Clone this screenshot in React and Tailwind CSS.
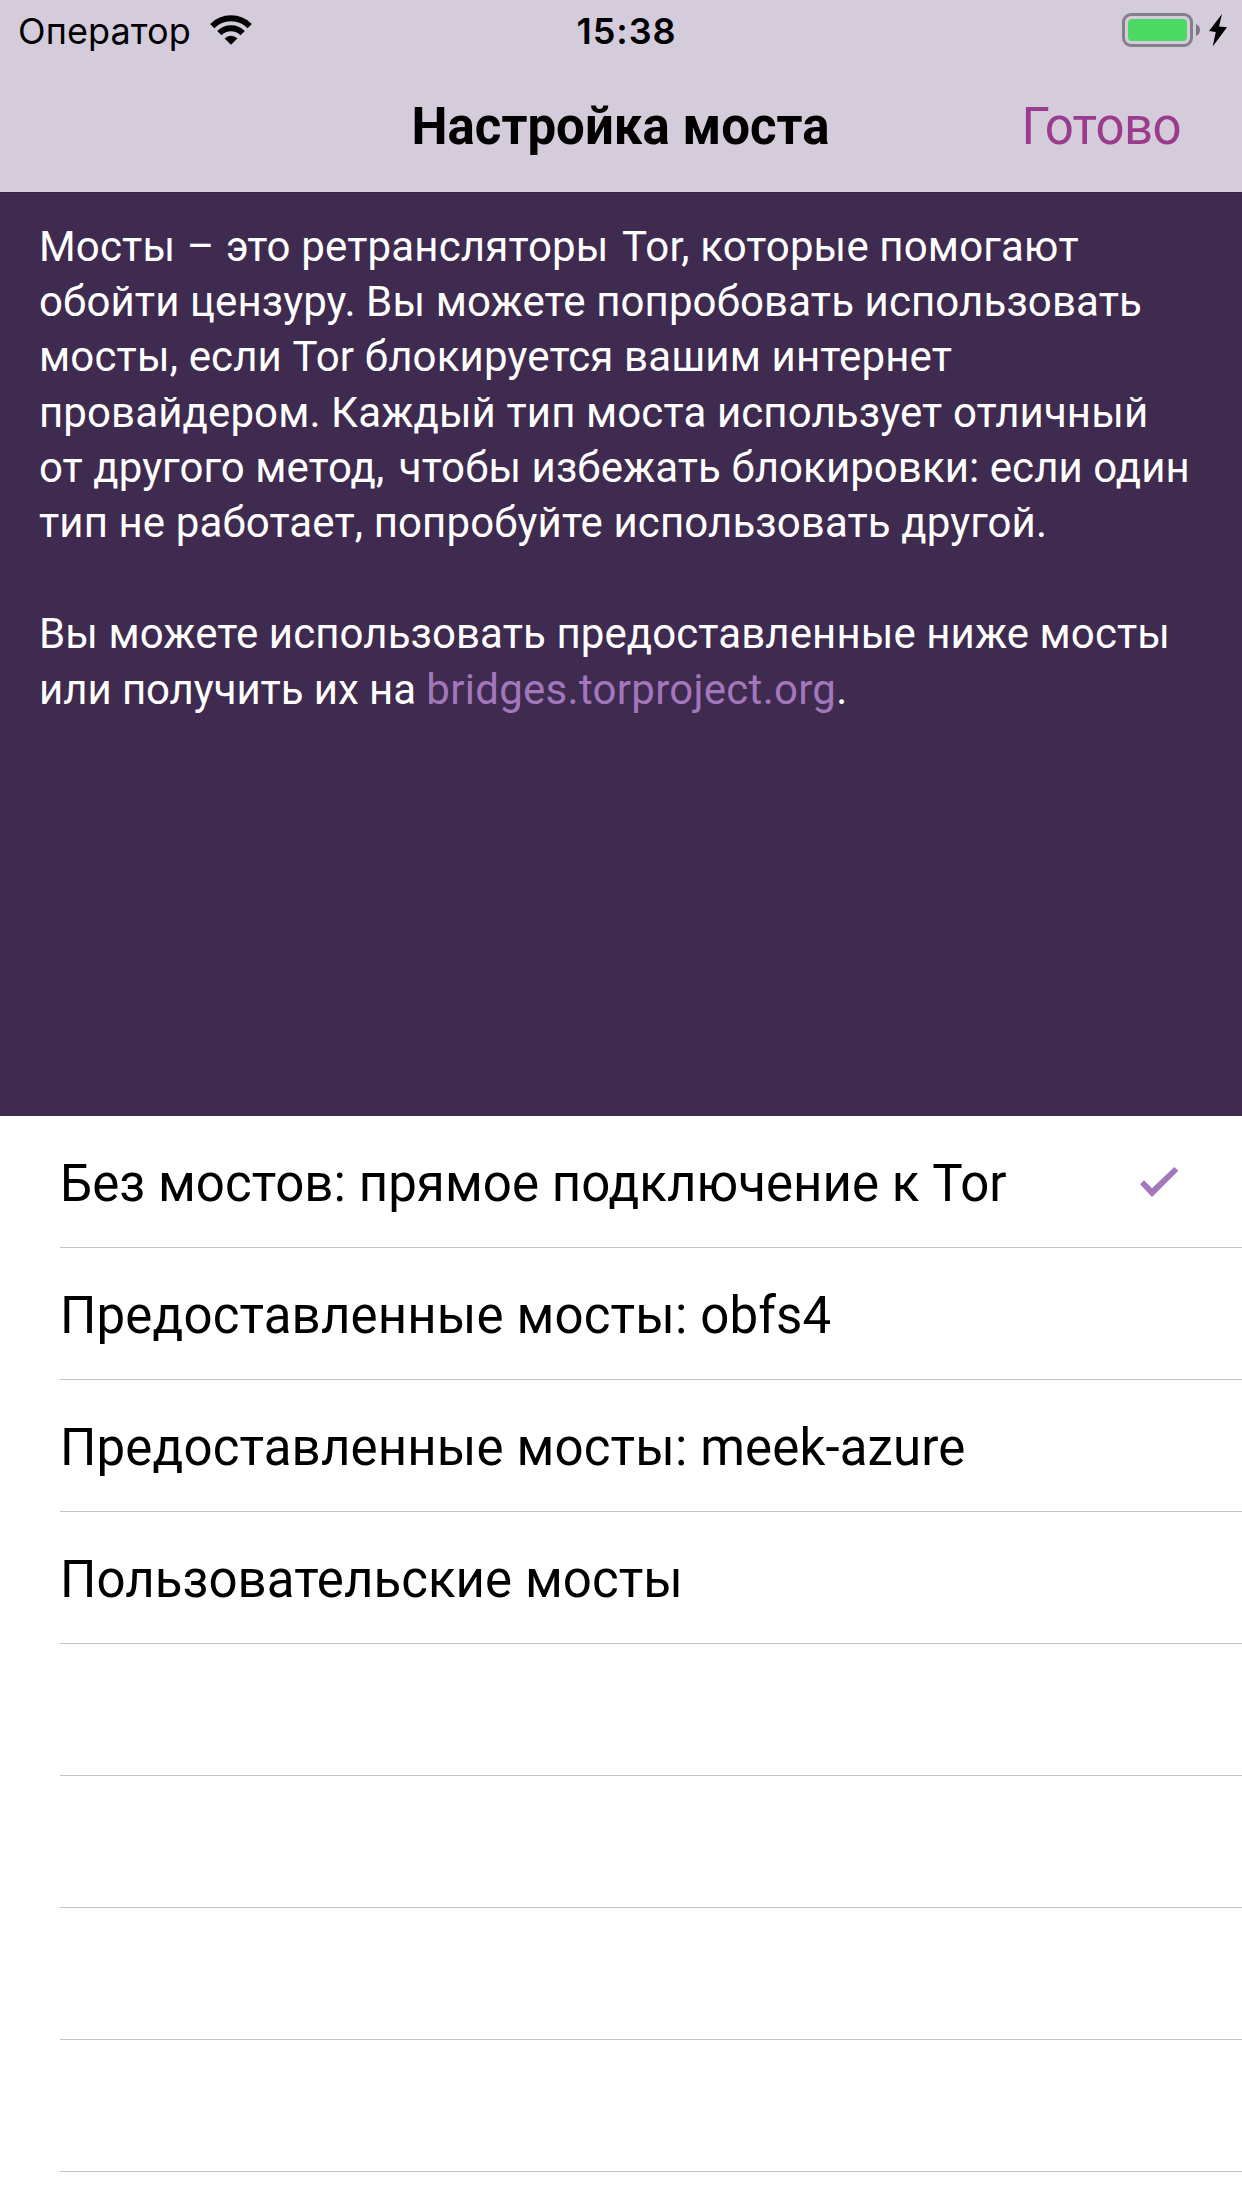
const options = [
  { label: "Без мостов: прямое подключение к Tor", tracking: "tracking-[0.05px]", selected: true },
  { label: "Предоставленные мосты: obfs4", tracking: "tracking-[0.14px]" },
  { label: "Предоставленные мосты: meek-azure", tracking: "tracking-[0.14px]" },
  { label: "Пользовательские мосты", tracking: "tracking-[0.06px]" },
  {}, {}, {}, {},
];

function WifiIcon() {
  return (
    <svg className="mb-[2px] ml-[19px] shrink-0" width="42" height="30" viewBox="0 0 42 30">
      <g fill="none" stroke="#000" strokeWidth="6">
        <path d="M2.26 11.06A26.5 26.5 0 0 1 39.74 11.06" />
        <path d="M9.33 18.13A16.5 16.5 0 0 1 32.67 18.13" />
      </g>
      <path d="M21 29.8 14.64 23.44A9 9 0 0 1 27.36 23.44Z" />
    </svg>
  );
}

function Battery() {
  return (
    <div className="flex items-center justify-end pb-[2px]">
      <div className="h-[34px] w-[71px] rounded-[9px] border-[3px] border-[#857f89] p-[3px]">
        <div className="h-full rounded-[4px] bg-[#4cd964]" />
      </div>
      <svg className="ml-[3px]" width="4" height="12" viewBox="0 0 4 12">
        <path d="M0 0Q4 2 4 6T0 12Z" fill="#7b7580" />
      </svg>
      <svg className="ml-[9px]" width="18" height="33" viewBox="0 0 18 33">
        <path d="M13 0 10 12.5 18 13.2 3.7 32.5 6.8 18 0 17Z" />
      </svg>
    </div>
  );
}

function Check() {
  return (
    <svg width="39" height="30" viewBox="0 0 39 30">
      <path d="M0 17.3 4 13.3 12 21.2 34.3 0 38.3 3.7 12 30Z" fill="#a377bb" />
    </svg>
  );
}

export default function App() {
  return (
    <div className="flex h-[2208px] w-[1242px] flex-col overflow-hidden bg-white font-['Roboto',sans-serif] text-black">
      <header className="h-[192px] shrink-0 bg-[#d4cbdb]">
        <div className="grid h-[62px] grid-cols-[1fr_auto_1fr] items-center pl-[22px] pr-[15px] font-['Inter',sans-serif] text-[36px]">
          <div className="-ml-[4px] flex items-center">
            <span className="tracking-[0.1px]">Оператор</span>
            <WifiIcon />
          </div>
          <span className="pl-[4px] text-center font-semibold tracking-[0.9px]">15:38</span>
          <Battery />
        </div>
        <div className="grid h-[130px] grid-cols-[1fr_auto_1fr] items-center pl-[60px] pr-[61px] text-[51px]">
          <span />
          <span className="font-bold">Настройка моста</span>
          <span className="text-right tracking-[-0.6px] text-[#9b3b8e]">Готово</span>
        </div>
      </header>
      <main className="h-[924px] shrink-0 whitespace-nowrap border-t border-[#33243f] bg-[#3f2b4f] px-[39px] pt-[25.8px] text-[42px] leading-[55.25px] text-white">
        <p className="tracking-[0.15px]">
          Мосты <span className="mx-[1px]">–</span> это ретрансляторы <span className="ml-[3px]">Tor,</span> которые помогают
        </p>
        <p className="tracking-[0.11px]">обойти цензуру. Вы можете попробовать использовать</p>
        <p className="tracking-[0.15px]">мосты, если Tor блокируется вашим интернет</p>
        <p className="tracking-[0.11px]">провайдером. Каждый тип моста использует отличный</p>
        <p className="tracking-[0.07px]">
          от другого метод, <span className="ml-[4px]">чтобы</span> избежать блокировки: если один
        </p>
        <p className="tracking-[0.11px]">тип не работает, попробуйте использовать другой.</p>
        <p className="mt-[55.8px] tracking-[0.09px]">Вы можете использовать предоставленные ниже мосты</p>
        <p className="pt-[0.7px] tracking-[-0.07px]">
          или получить их на <a className="tracking-[0.28px] text-[#a377bb]">bridges.torproject.org</a>.
        </p>
      </main>
      <ul className="pl-[60px] text-[51px]">
        {options.map(({ label, tracking, selected }, i) => (
          <li key={i} className="flex h-[132px] items-center justify-between border-b border-[#c4c3c8] pr-[63px]">
            <span className={`pt-1.5 ${tracking ?? ""}`}>{label}</span>
            {selected && <Check />}
          </li>
        ))}
      </ul>
    </div>
  );
}
